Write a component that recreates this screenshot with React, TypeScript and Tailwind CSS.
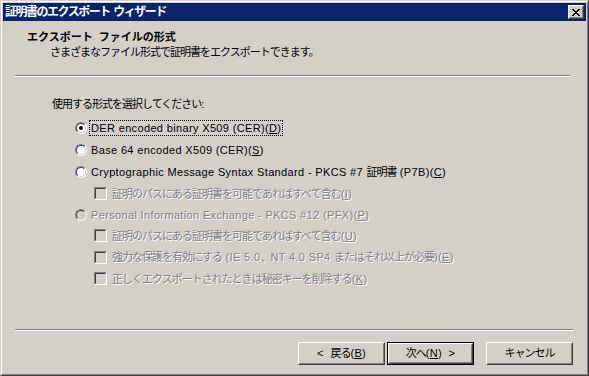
import React from "react";

const J = ({ children }: { children: React.ReactNode }) => (
  <span className="tracking-[-1px]">{children}</span>
);

const Radio = ({ checked, disabled }: { checked?: boolean; disabled?: boolean }) => (
  <div className="w-[12px] h-[12px] shrink-0 rounded-full border border-t-[#808080] border-l-[#808080] border-r-white border-b-white">
    <div
      className={
        "w-full h-full rounded-full border border-t-[#404040] border-l-[#404040] border-r-[#d4d0c8] border-b-[#d4d0c8] flex items-center justify-center " +
        (disabled ? "bg-[#d4d0c8]" : "bg-white")
      }
    >
      {checked && <div className="w-[4px] h-[4px] rounded-full bg-black" />}
    </div>
  </div>
);

const Check = () => (
  <div className="w-[13px] h-[13px] shrink-0 border border-t-[#808080] border-l-[#808080] border-r-white border-b-white">
    <div className="w-full h-full border border-t-[#404040] border-l-[#404040] border-r-[#d4d0c8] border-b-[#d4d0c8] bg-[#d4d0c8]" />
  </div>
);

const dis = "text-[#808080] [text-shadow:1px_1px_0_#ffffff]";

const RadioRow = ({
  children,
  checked,
  disabled,
  focus,
  h,
}: {
  children: React.ReactNode;
  checked?: boolean;
  disabled?: boolean;
  focus?: boolean;
  h: string;
}) => (
  <div className={"flex items-center pl-[72px] gap-[2px] " + h}>
    <Radio checked={checked} disabled={disabled} />
    <span
      className={
        "px-[1px] leading-[14px] border tracking-[0.35px] " +
        (focus ? "border-dotted border-black" : "border-transparent") +
        " " +
        (disabled ? dis : "text-black")
      }
    >
      {children}
    </span>
  </div>
);

const CheckRow = ({ children, h }: { children: React.ReactNode; h: string }) => (
  <div className={"flex items-center pl-[91px] gap-[3px] " + h}>
    <Check />
    <span className={"px-[1px] leading-[14px] border border-transparent tracking-[0.35px] " + dis}>{children}</span>
  </div>
);

const Btn = ({ children, def, ml }: { children: React.ReactNode; def?: boolean; ml: string }) => (
  <div className={"w-[87px] h-[23px] " + ml + (def ? " border border-black" : "")}>
    <div className="w-full h-full border border-t-white border-l-white border-r-[#404040] border-b-[#404040]">
      <div className="w-full h-full border border-t-[#d4d0c8] border-l-[#d4d0c8] border-r-[#808080] border-b-[#808080] flex items-center justify-center text-black tracking-[0.3px] whitespace-pre">
        {children}
      </div>
    </div>
  </div>
);

export default function App() {
  return (
    <div
      className="w-[589px] h-[376px] border border-t-[#d4d0c8] border-l-[#d4d0c8] border-r-[#404040] border-b-[#404040] text-[11px]"
      style={{ fontFamily: '"Liberation Sans Narrow", "Liberation Sans", "Noto Sans CJK JP", sans-serif' }}
    >
      <div className="w-full h-full border border-t-white border-l-white border-r-[#808080] border-b-[#808080] bg-[#d4d0c8] p-[1px] flex flex-col">
        {/* Title bar */}
        <div className="h-[18px] bg-[#0a246a] flex items-center justify-between pl-[2px] pr-[2px]">
          <span className="text-white font-bold text-[12px] leading-[18px] tracking-[-1.5px] whitespace-pre">
            証明書のエクスポート  ウィザード
          </span>
          <div className="w-[16px] h-[14px] border border-t-white border-l-white border-r-[#404040] border-b-[#404040]">
            <div className="w-full h-full border border-t-[#d4d0c8] border-l-[#d4d0c8] border-r-[#808080] border-b-[#808080] bg-[#d4d0c8] flex items-center justify-center">
              <svg width="8" height="7" viewBox="0 0 8 7" shapeRendering="crispEdges">
                <path
                  d="M0 0h2v1H0zM6 0h2v1H6zM1 1h2v1H1zM5 1h2v1H5zM2 2h4v1H2zM3 3h2v1H3zM2 4h4v1H2zM1 5h2v1H1zM5 5h2v1H5zM0 6h2v1H0zM6 6h2v1H6z"
                  fill="#000"
                />
              </svg>
            </div>
          </div>
        </div>

        {/* Header */}
        <div className="pl-[24px] mt-[9px] flex flex-col">
          <span className="font-bold text-black leading-[15px] whitespace-pre">エクスポート  ファイルの形式</span>
          <span className="pl-[23px] text-black leading-[15px]">
            <J>さまざまなファイル形式で証明書をエクスポートできます。</J>
          </span>
        </div>

        <div className="ml-[12px] w-[555px] h-[2px] mt-[15px] border-t border-t-[#808080] border-b border-b-white" />

        {/* Body */}
        <div className="pl-[49px] mt-[20px] leading-[15px] text-black">
          <J>使用する形式を選択してください</J>:
        </div>

        <div className="mt-[5px] flex flex-col">
          <RadioRow checked focus h="h-[22px]">
            DER encoded binary X509 (CER)(<u>D</u>)
          </RadioRow>
          <RadioRow h="h-[22px]">
            Base 64 encoded X509 (CER)(<u>S</u>)
          </RadioRow>
          <RadioRow h="h-[22px]">
            Cryptographic Message Syntax Standard - PKCS #7 <J>証明書</J> (P7B)(<u>C</u>)
          </RadioRow>
          <CheckRow h="h-[21px]">
            <J>証明のパスにある証明書を可能であればすべて含む</J>(<u>I</u>)
          </CheckRow>
          <RadioRow disabled h="h-[21px]">
            Personal Information Exchange - PKCS #12 (PFX)(<u>P</u>)
          </RadioRow>
          <CheckRow h="h-[21px]">
            <J>証明のパスにある証明書を可能であればすべて含む</J>(<u>U</u>)
          </CheckRow>
          <CheckRow h="h-[22px]">
            <J>強力な保護を有効にする</J> (IE 5.0<J>、</J>NT 4.0 SP4 <J>またはそれ以上が必要</J>)(<u>E</u>)
          </CheckRow>
          <CheckRow h="h-[21px]">
            <J>正しくエクスポートされたときは秘密キーを削除する</J>(<u>K</u>)
          </CheckRow>
        </div>

        <div className="flex-1" />

        <div className="ml-[12px] w-[558px] h-[2px] border-t border-t-[#808080] border-b border-b-white" />

        <div className="mt-[11px] mb-[8px] flex justify-end pr-[13px]">
          <Btn ml="">
            {"<  "}<J>戻る</J>(<u>B</u>)
          </Btn>
          <Btn def ml="ml-[2px]">
            <J>次へ</J>(<u>N</u>){"  >"}
          </Btn>
          <Btn ml="ml-[12px]">
            <J>キャンセル</J>
          </Btn>
        </div>
      </div>
    </div>
  );
}
